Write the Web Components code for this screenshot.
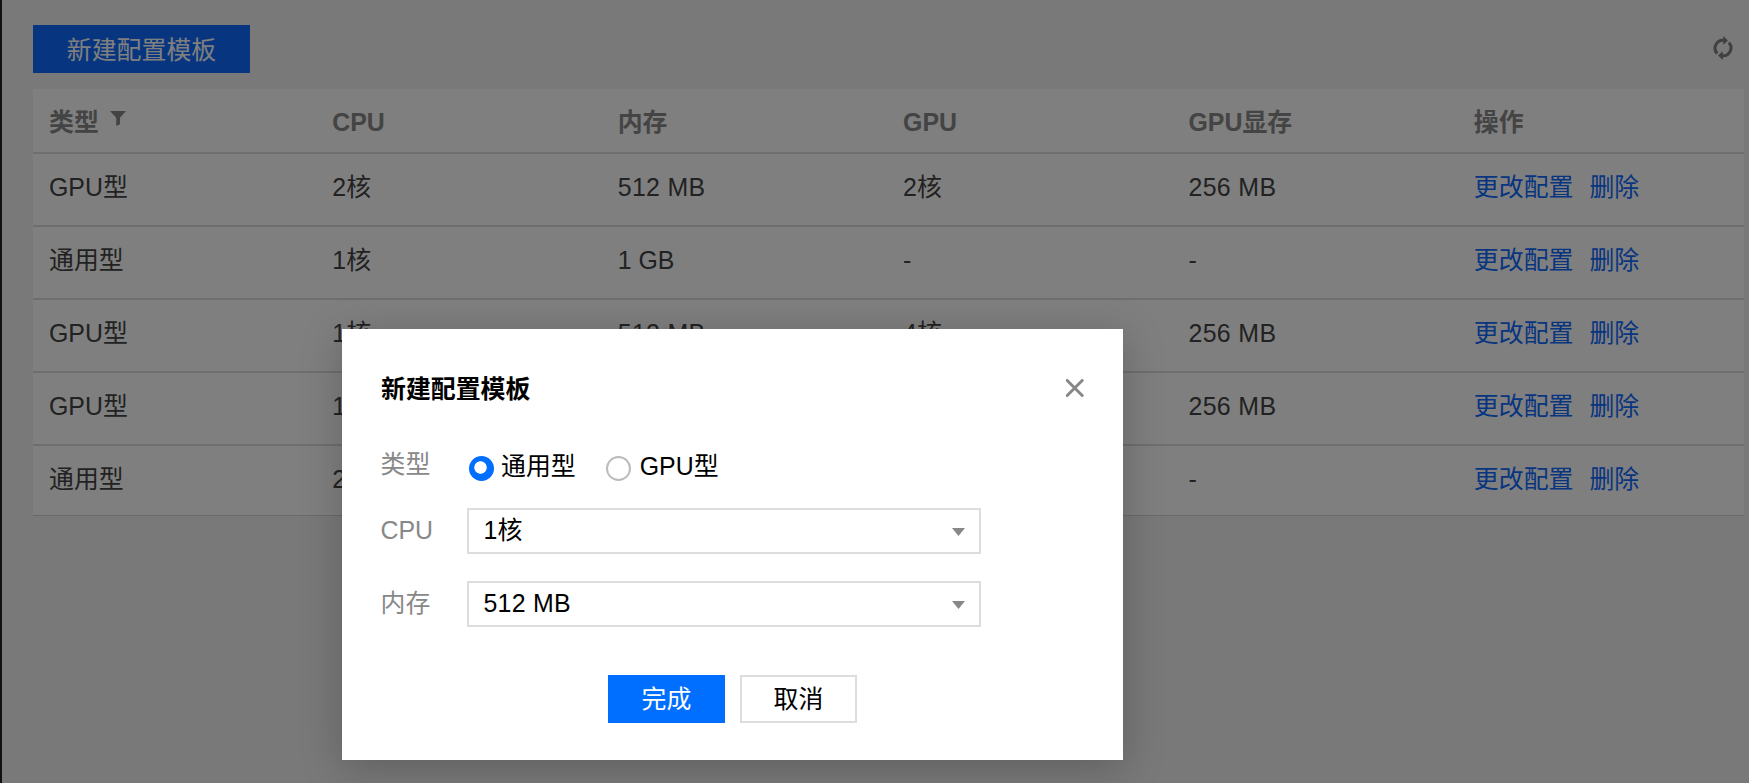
<!DOCTYPE html>
<html lang="zh-CN">
<head>
<meta charset="utf-8">
<title>配置模板</title>
<style>
html,body{margin:0;height:100%;overflow:hidden}
body{font:24.9px/36px "Liberation Sans","Noto Sans CJK SC",sans-serif;background:#f2f2f2;color:#444}
</style>
</head>
<body>
<template-page></template-page>
<script>
const define = (name, html, init) => {
  const t = document.createElement('template');
  t.innerHTML = html;
  customElements.define(name, class extends HTMLElement {
    connectedCallback() {
      if (this.shadowRoot) return;
      const root = this.attachShadow({mode: 'open'});
      root.append(t.content.cloneNode(true));
      if (init) init.call(this, root);
    }
  });
};

define('ui-button', `
<style>
:host{display:flex;align-items:center;justify-content:center;box-sizing:border-box;height:48px;background:#fff;border:2px solid #ddd;color:#000;white-space:nowrap}
:host([primary]){background:var(--primary,#006eff);border-color:var(--primary,#006eff);color:#fff}
span{position:relative;top:var(--text-shift,0px)}
</style><span><slot></slot></span>`);

define('filter-icon', `
<style>:host{display:block;width:16px;height:15px}svg{display:block}</style>
<svg width="16" height="15" viewBox="0 0 16 15"><path fill="#888" d="M0 0h16l-6 6.8v6.4L6.2 15V6.8z"/></svg>`);

define('refresh-icon', `
<style>:host{display:block;width:20px;height:24px}svg{display:block}</style>
<svg width="20" height="24" viewBox="0 0 20 24"><g fill="none" stroke="#7f7f7f" stroke-width="3"><path d="M4.2 17.6A8 8 0 0 1 10.8 4.2"/><path d="M15.8 6.4A8 8 0 0 1 9.2 19.8"/></g><path fill="#7f7f7f" d="M10.2 0l4.8 4.6-4.8 4.2zM9.8 24l-4.8-4.6 4.8-4.2z"/></svg>`);

define('config-row', `
<style>
:host{display:grid;grid-template-columns:283.3px repeat(4,285.4px) 1fr;box-sizing:border-box;height:73px;border-bottom:2px solid #ddd;padding-bottom:5px;align-items:center}
:host([last]){height:70px;padding-bottom:4px;border-bottom-width:1px;border-color:#d2d2d2}
:host([head]){height:65px;padding:2px 0 0;color:#888;font-weight:bold}
div{display:flex;padding-left:16px;white-space:nowrap}
.size{letter-spacing:.35px}
filter-icon{margin:7px 0 0 11px}
a{color:#0e6aff;margin-right:16px}
</style>`, function (root) {
  const head = this.hasAttribute('head');
  this.getAttribute('cells').split(',').forEach((text, i) => {
    const d = document.createElement('div');
    d.textContent = text;
    if (text.includes('MB')) d.className = 'size';
    if (head && i === 0) d.append(document.createElement('filter-icon'));
    root.append(d);
  });
  if (!head) {
    const d = document.createElement('div');
    d.innerHTML = '<a>更改配置</a><a>删除</a>';
    root.append(d);
  }
});

define('config-table', `
<style>:host{display:block;background:#fff}</style>
<config-row head cells="类型,CPU,内存,GPU,GPU显存,操作"></config-row>
<config-row cells="GPU型,2核,512 MB,2核,256 MB"></config-row>
<config-row cells="通用型,1核,1 GB,-,-"></config-row>
<config-row cells="GPU型,1核,512 MB,4核,256 MB"></config-row>
<config-row cells="GPU型,1核,,,256 MB"></config-row>
<config-row last cells="通用型,2核,,,-"></config-row>`);

define('ui-radio', `
<style>
:host{display:flex;align-items:center;color:#000;white-space:nowrap}
i{box-sizing:border-box;width:25px;height:25px;border:2px solid #bbb;border-radius:50%;margin:5px 9px 0 0}
:host([checked]) i{border:0;background:radial-gradient(circle at 11.5px 11.5px,#fff 5.8px,#006eff 6.6px);margin-right:7px}
</style><i></i><slot></slot>`);

define('ui-select', `
<style>
:host{display:flex;align-items:center;justify-content:space-between;box-sizing:border-box;width:514px;height:46px;border:2px solid #ddd;padding:0 14px 3px 14.5px;color:#000;background:#fff}
svg{margin-top:5px}
.size{letter-spacing:.25px}
</style><span class="size"><slot></slot></span><svg width="13" height="8" viewBox="0 0 13 8"><path fill="#888" d="M0 0h13L6.5 8z"/></svg>`);

define('form-row', `
<style>
:host{display:grid;grid-template-columns:86px 1fr;align-items:center}
label{color:#888;position:relative;top:var(--label-shift,-1.5px);left:-.5px}
div{display:flex}
</style><label></label><div><slot></slot></div>`, function (root) {
  root.querySelector('label').textContent = this.getAttribute('label');
});

define('config-dialog', `
<style>
:host{position:absolute;left:342px;top:329px;width:781px;height:431px;box-sizing:border-box;background:#fff;box-shadow:0 8px 40px rgba(0,0,0,.22);padding:41px 39px 0;color:#000}
header{display:flex;justify-content:space-between;align-items:center;height:36px}
b{white-space:nowrap;position:relative;top:1px}
.type{height:40px;margin-top:40px;--label-shift:-2.5px}
.cpu{height:46px;margin-top:22px}
.mem{height:46px;margin-top:27px}
.type ui-radio:first-child{margin-left:2px}
.type ui-radio+ui-radio{margin-left:30px}
footer{display:flex;justify-content:center;gap:15px;margin-top:48px}
footer ui-button{width:117px}
</style>
<header><b>新建配置模板</b><svg width="18" height="18" viewBox="0 0 18 18"><path d="M1.2 1.5l15 15m0-15l-15 15" stroke="#888" stroke-width="3" stroke-linecap="round"/></svg></header>
<form-row class="type" label="类型"><ui-radio checked>通用型</ui-radio><ui-radio>GPU型</ui-radio></form-row>
<form-row class="cpu" label="CPU"><ui-select>1核</ui-select></form-row>
<form-row class="mem" label="内存"><ui-select>512 MB</ui-select></form-row>
<footer><ui-button primary>完成</ui-button><ui-button>取消</ui-button></footer>`);

define('template-page', `
<style>
:host{display:block;position:relative;box-sizing:border-box;height:783px;border-left:2px solid #222;padding:25px 5px 0 31px}
.bar{display:flex;justify-content:space-between;align-items:center;height:48px;margin-bottom:16px}
.bar ui-button{width:217px;--text-shift:.5px;--primary:#0e6aff}
refresh-icon{margin:0 11px 2px 0}
.mask{position:absolute;inset:0 0 0 -2px;background:rgba(0,0,0,.5)}
</style>
<div class="bar"><ui-button primary>新建配置模板</ui-button><refresh-icon></refresh-icon></div>
<config-table></config-table>
<div class="mask"><config-dialog></config-dialog></div>`);
</script>
</body>
</html>
